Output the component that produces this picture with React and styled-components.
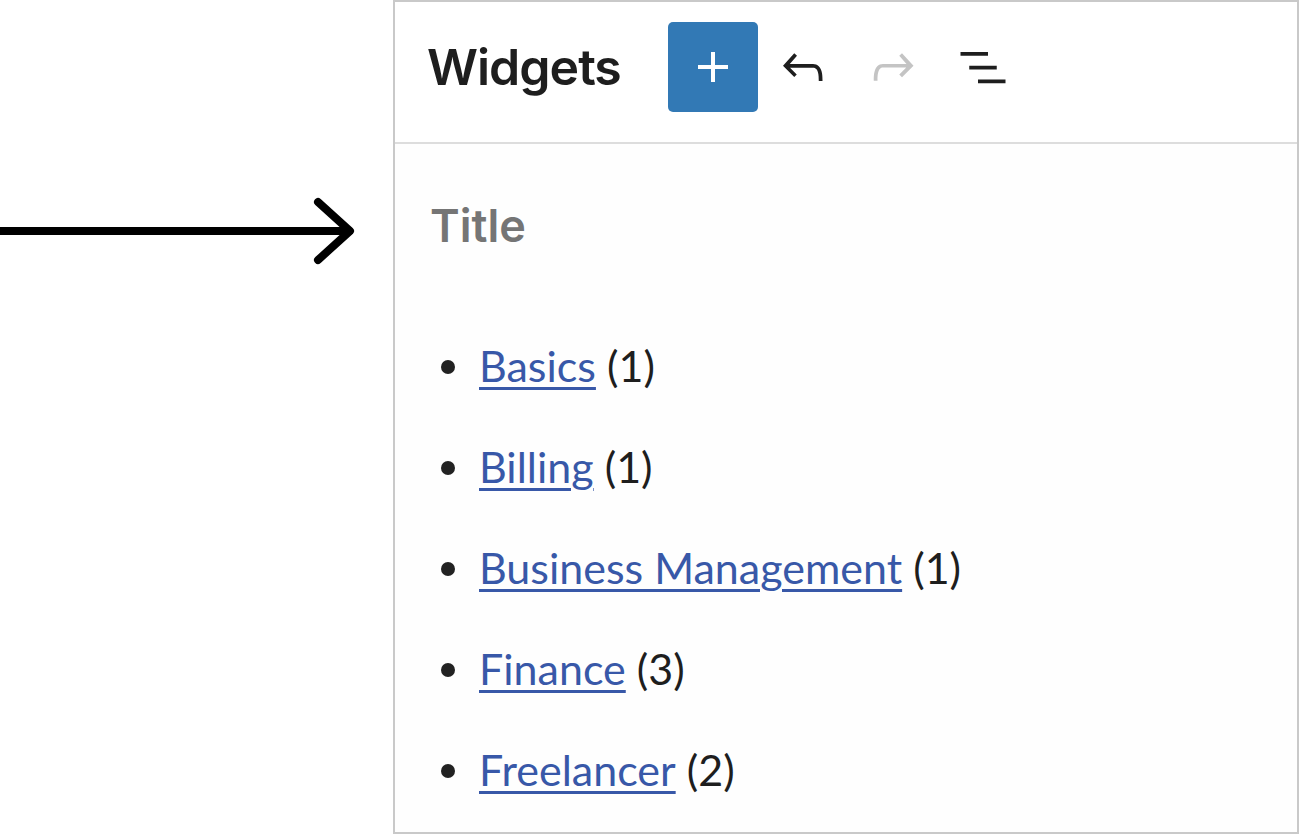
import styled, { createGlobalStyle } from 'styled-components';

const GlobalStyle = createGlobalStyle`
  html, body {
    margin: 0;
    padding: 0;
    background: #ffffff;
    overflow: hidden;
  }
  * {
    box-sizing: border-box;
  }
`;

const categories = [
  { name: 'Basics', count: 1 },
  { name: 'Billing', count: 1 },
  { name: 'Business Management', count: 1 },
  { name: 'Finance', count: 3 },
  { name: 'Freelancer', count: 2 },
];

const App = () => {
  return (
    <Page>
      <GlobalStyle />
      <Annotation>
        <svg width="393" height="70" viewBox="0 0 393 70">
          <line x1="-10" y1="35" x2="349" y2="35" stroke="#000" strokeWidth="8" strokeLinecap="round" />
          <polyline
            points="318,6 350,35 318,64"
            fill="none"
            stroke="#000"
            strokeWidth="8"
            strokeLinecap="round"
            strokeLinejoin="round"
          />
        </svg>
      </Annotation>
      <Panel>
        <Header>
          <Heading>Widgets</Heading>
          <Toolbar>
            <ToolButton $primary>
              <svg width="60" height="60" viewBox="0 0 24 24">
                <path d="M18 11.2h-5.2V6h-1.6v5.2H6v1.6h5.2V18h1.6v-5.2H18z" fill="#fff" />
              </svg>
            </ToolButton>
            <ToolButton>
              <svg width="60" height="60" viewBox="0 0 24 24">
                <path
                  d="M18.3 11.7c-.6-.6-1.4-.9-2.3-.9H6.7l2.9-3.3-1.1-1-4.5 5L8.5 16l1-1-2.7-2.7H16c.5 0 .9.2 1.3.5 1 1 1 3.4 1 4.5v.3h1.5v-.2c0-1.5 0-4.3-1.5-5.7z"
                  fill="#1e1e1e"
                />
              </svg>
            </ToolButton>
            <ToolButton>
              <svg width="60" height="60" viewBox="0 0 24 24">
                <path
                  d="M15.6 6.5l-1.1 1 2.9 3.3H8c-.9 0-1.7.3-2.3.9-1.4 1.5-1.4 4.2-1.4 5.6v.2h1.5v-.3c0-1.1 0-3.5 1-4.5.3-.3.7-.5 1.3-.5h9.2L14.5 15l1.1 1.1 4.6-4.6-4.6-5z"
                  fill="#c4c4c4"
                />
              </svg>
            </ToolButton>
            <ToolButton>
              <svg width="60" height="60" viewBox="0 0 24 24">
                <path d="M3 6h11v1.5H3V6Zm3.5 5.5h11V13h-11v-1.5ZM21 17H10v1.5h11V17Z" fill="#1e1e1e" />
              </svg>
            </ToolButton>
          </Toolbar>
        </Header>
        <Content>
          <WidgetTitle>Title</WidgetTitle>
          <CategoryList>
            {categories.map(cat => (
              <CategoryItem key={cat.name}>
                <CategoryLink href="#">{cat.name}</CategoryLink> ({cat.count})
              </CategoryItem>
            ))}
          </CategoryList>
        </Content>
      </Panel>
    </Page>
  );
};

export default App;

const Page = styled.div`
  display: flex;
  width: 1299px;
  height: 834px;
  background: #ffffff;
`;

const Annotation = styled.div`
  width: 393px;
  flex-shrink: 0;
  padding-top: 196px;

  svg {
    display: block;
  }
`;

const Panel = styled.div`
  display: flex;
  flex-direction: column;
  flex: 1;
  height: 834px;
  border: 2px solid #c9c9c9;
  background: #fefefe;
  overflow: hidden;
`;

const Header = styled.div`
  display: flex;
  flex-shrink: 0;
  align-items: center;
  height: 142px;
  padding: 0 0 10px 32px;
  background: #ffffff;
  border-bottom: 2px solid #dddddd;
`;

const Heading = styled.h1`
  margin: 0 47px 0 0;
  font-family: Inter, 'Liberation Sans', sans-serif;
  font-size: 50px;
  font-weight: 600;
  letter-spacing: -1px;
  color: #1e1e1e;
`;

const Toolbar = styled.div`
  display: flex;
  align-items: center;
`;

const ToolButton = styled.div`
  display: flex;
  align-items: center;
  justify-content: center;
  width: 90px;
  height: 90px;
  border-radius: 5px;
  background: ${p => (p.$primary ? '#3279b5' : 'transparent')};

  svg {
    display: block;
  }
`;

const Content = styled.div`
  flex: 1;
  padding: 55px 0 0 35px;
`;

const WidgetTitle = styled.h2`
  margin: 0;
  font-family: Inter, 'Liberation Sans', sans-serif;
  font-size: 45px;
  line-height: 54px;
  font-weight: 600;
  color: #757575;
`;

const CategoryList = styled.ul`
  list-style: none;
  margin: 81px 0 0 0;
  padding: 0 0 0 11px;
`;

const CategoryItem = styled.li`
  display: flex;
  align-items: baseline;
  height: 63px;
  margin-bottom: 38px;
  font-family: Lato, 'Open Sans', sans-serif;
  font-size: 43px;
  line-height: 63px;
  color: #1e1e1e;
  white-space: pre;

  &::before {
    content: '';
    display: inline-block;
    flex-shrink: 0;
    width: 14px;
    height: 14px;
    margin-right: 24px;
    border-radius: 50%;
    background: #222222;
    transform: translateY(-8px);
  }
`;

const CategoryLink = styled.a`
  color: #3858a8;
  text-decoration: underline;
  text-decoration-thickness: 3px;
  text-underline-offset: 5px;
`;
